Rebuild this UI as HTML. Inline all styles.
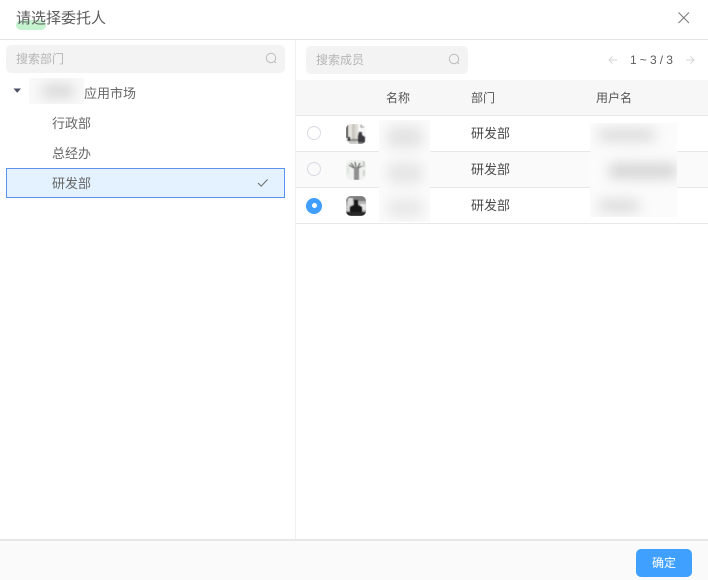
<!DOCTYPE html>
<html lang="zh">
<head>
<meta charset="utf-8">
<style>
html,body{margin:0;padding:0;background:#fff}
body{width:708px;height:580px;position:relative;overflow:hidden;font-family:"Liberation Sans","Noto Sans CJK SC",sans-serif;font-size:13px;color:#4a4a4a}
.a{position:absolute}
.t{position:absolute;white-space:nowrap;line-height:20px}
.blur{position:absolute;filter:blur(6px);border-radius:8px}
.clip{position:absolute;overflow:hidden;background:#fdfdfd}
.av{position:absolute;left:346px;width:20px;height:20px;border-radius:5px;overflow:hidden}
.radio{position:absolute;left:307px;width:12px;height:12px;border:1.5px solid #d9dae4;border-radius:50%;background:#fff}
</style>
</head>
<body>
<!-- header -->
<div class="a" style="left:16px;top:20px;width:30px;height:10px;background:#c4f3d0;border-radius:5px"></div>
<div class="t" style="left:16px;top:9px;font-size:15px;color:#5c5c5c;line-height:20px">请选择委托人</div>
<svg class="a" style="left:677px;top:11px" width="14" height="14" viewBox="0 0 14 14"><path d="M1.5 1.5L12 12M12 1.5L1.5 12" stroke="#777" stroke-width="1" fill="none"/></svg>
<div class="a" style="left:0;top:39px;width:708px;height:1px;background:#e6e6e6"></div>

<!-- left panel -->
<div class="a" style="left:295px;top:40px;width:1px;height:500px;background:#efefef"></div>
<div class="a" style="left:6px;top:45px;width:279px;height:28px;background:#f3f3f3;border-radius:5px"></div>
<div class="t" style="left:16px;top:49px;font-size:12px;color:#b5b5b5">搜索部门</div>
<svg class="a" style="left:265px;top:52px" width="13" height="13" viewBox="0 0 13 13"><circle cx="6" cy="6" r="4.7" stroke="#bbb" fill="none"/><path d="M9.5 9.5L11 11" stroke="#bbb" fill="none"/></svg>
<svg class="a" style="left:13px;top:88px" width="9" height="6" viewBox="0 0 9 6"><path d="M0.5 0.5H8L4.2 4.8Z" fill="#4b4f66"/></svg>
<div class="clip" style="left:29px;top:78px;width:55px;height:26px;background:#f9f9f9"><div class="blur" style="left:12px;top:6px;width:34px;height:14px;background:#d9d9d9"></div></div>
<div class="t" style="left:84px;top:84px;color:#666">应用市场</div>
<div class="t" style="left:52px;top:114px;color:#666">行政部</div>
<div class="t" style="left:52px;top:144px;color:#666">总经办</div>
<div class="a" style="left:6px;top:168px;width:277px;height:28px;background:#e3f2fe;border:1px solid #5b93f5"></div>
<div class="t" style="left:52px;top:174px;color:#666">研发部</div>
<svg class="a" style="left:257px;top:178px" width="12" height="10" viewBox="0 0 12 10"><path d="M1 5L4.2 8.2L10.5 1.5" stroke="#666" stroke-width="1" fill="none"/></svg>

<!-- right toolbar -->
<div class="a" style="left:306px;top:46px;width:162px;height:28px;background:#f3f3f3;border-radius:5px"></div>
<div class="t" style="left:316px;top:50px;font-size:12px;color:#b5b5b5">搜索成员</div>
<svg class="a" style="left:448px;top:53px" width="13" height="13" viewBox="0 0 13 13"><circle cx="6" cy="6" r="4.7" stroke="#bbb" fill="none"/><path d="M9.5 9.5L11 11" stroke="#bbb" fill="none"/></svg>
<svg class="a" style="left:607px;top:55px" width="12" height="10" viewBox="0 0 12 10"><path d="M10 5H2M5.5 1.5L2 5L5.5 8.5" stroke="#d4d4d4" fill="none"/></svg>
<div class="t" style="left:630px;top:50px;font-size:12px;color:#5c5c5c;letter-spacing:-.1px">1 ~ 3 / 3</div>
<svg class="a" style="left:684px;top:55px" width="12" height="10" viewBox="0 0 12 10"><path d="M2 5H10M6.5 1.5L10 5L6.5 8.5" stroke="#d4d4d4" fill="none"/></svg>

<!-- table head -->
<div class="a" style="left:296px;top:80px;width:412px;height:35px;background:#f7f7f7"></div>
<div class="a" style="left:296px;top:115px;width:412px;height:1px;background:#e8e8e8"></div>
<div class="t" style="left:386px;top:88px;font-size:12px;color:#555">名称</div>
<div class="t" style="left:471px;top:88px;font-size:12px;color:#555">部门</div>
<div class="t" style="left:596px;top:88px;font-size:12px;color:#555">用户名</div>

<!-- rows -->
<div class="a" style="left:296px;top:152px;width:412px;height:35px;background:#fafafa"></div>
<div class="a" style="left:296px;top:151px;width:412px;height:1px;background:#e8e8e8"></div>
<div class="a" style="left:296px;top:187px;width:412px;height:1px;background:#e8e8e8"></div>
<div class="a" style="left:296px;top:223px;width:412px;height:1px;background:#e8e8e8"></div>

<div class="radio" style="top:126px"></div>
<div class="radio" style="top:162px;background:#fafafa"></div>
<div class="a" style="left:306px;top:198px;width:16px;height:16px;border-radius:50%;background:#3f9eff"></div>
<div class="a" style="left:312px;top:203px;width:5px;height:5px;border-radius:50%;background:#fff"></div>

<!-- avatars -->
<svg class="av" style="top:124px" viewBox="0 0 20 20"><rect width="20" height="20" fill="#f8f8f8"/><g style="filter:blur(.45px)"><rect x="0" y="0" width="2" height="14" fill="#555"/><rect x="2" y="0" width="4" height="15" fill="#e6e3de"/><rect x="6" y="0" width="3" height="15" fill="#c9c5bf"/><rect x="9" y="0" width="3" height="15" fill="#dedad5"/><path d="M15 .5V3H18" stroke="#777" stroke-width=".8" fill="none"/><path d="M13 8H16V11L19 13V18H12V12Z" fill="#3a3a40"/><rect x="1" y="15" width="11" height="2" fill="#8a8a84"/><rect x="3" y="17" width="8" height="3" fill="#c8c8c4"/><rect x="12" y="18" width="8" height="2" fill="#777"/><rect x="2" y="13" width="2" height="4" fill="#333"/></g></svg>
<svg class="av" style="top:160px" viewBox="0 0 20 20"><rect width="20" height="20" fill="#eef1ee"/><g style="filter:blur(.45px)"><rect x="8" y="7" width="5" height="13" fill="#8f8f8f"/><path d="M5 3L8 7M9 2L10 7M14 3L12 7M3 5L8 8M16 6L12 8" stroke="#444" stroke-width=".9" fill="none"/><rect x="17" y="1" width="1.5" height="6" fill="#bbb"/><rect x="17" y="10" width="1.5" height="6" fill="#ccc"/><rect x="1" y="6" width="2" height="8" fill="#dfe4df"/></g></svg>
<svg class="av" style="top:196px" viewBox="0 0 20 20"><rect width="20" height="20" fill="#b5b5b5"/><g style="filter:blur(.45px)"><rect y="0" width="20" height="5" fill="#7d7d7d"/><rect x="2" y="2" width="5" height="7" fill="#dcdcdc"/><rect x="14" y="8" width="6" height="6" fill="#e8e8e8"/><rect x="0" y="9" width="5" height="6" fill="#cfcfcf"/><path d="M8 4H12V9L16 11V20H4V11L8 9Z" fill="#161616"/><rect x="0" y="16" width="20" height="4" fill="#2a2a2a"/></g></svg>

<!-- blurred name column -->
<div class="clip" style="left:379px;top:120px;width:51px;height:102px;background:#fbfbfb">
  <div class="blur" style="left:8px;top:6px;width:36px;height:22px;background:#e3e3e3"></div>
  <div class="blur" style="left:8px;top:42px;width:36px;height:22px;background:#e6e6e6"></div>
  <div class="blur" style="left:8px;top:78px;width:36px;height:20px;background:#e9e9e9"></div>
</div>
<div class="t" style="left:471px;top:124px;color:#4a4a4a">研发部</div>
<div class="t" style="left:471px;top:160px;color:#4a4a4a">研发部</div>
<div class="t" style="left:471px;top:196px;color:#4a4a4a">研发部</div>
<!-- blurred username column -->
<div class="clip" style="left:590px;top:123px;width:87px;height:94px;background:#fbfbfb">
  <div class="blur" style="left:8px;top:5px;width:58px;height:14px;background:#dedede"></div>
  <div class="blur" style="left:18px;top:40px;width:70px;height:16px;background:#d6d6d6"></div>
  <div class="blur" style="left:8px;top:76px;width:42px;height:14px;background:#dedede"></div>
</div>

<!-- footer -->
<div class="a" style="left:0;top:539px;width:708px;height:2px;background:#e6e6e6"></div>
<div class="a" style="left:0;top:541px;width:708px;height:39px;background:#fafafa"></div>
<div class="a" style="left:636px;top:549px;width:56px;height:28px;background:#40a0ff;border-radius:5px"></div>
<div class="t" style="left:636px;top:553px;width:56px;text-align:center;font-size:12px;color:#fff">确定</div>
</body>
</html>
